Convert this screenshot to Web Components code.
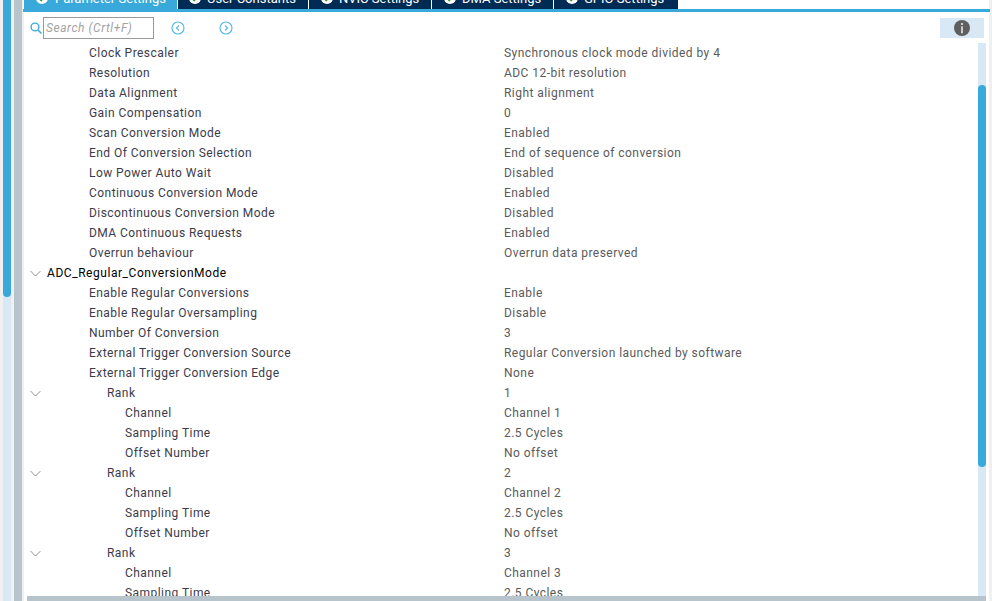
<!DOCTYPE html>
<html>
<head>
<meta charset="utf-8">
<title>Parameter Settings</title>
<style>
  html, body { margin: 0; height: 100%; overflow: hidden; background: #f0f0f0; }
  body { font: 12px Roboto, "Liberation Sans", sans-serif; }
</style>
</head>
<body>
<config-window>
  <settings-tab active style="width:153px">Parameter Settings</settings-tab>
  <settings-tab style="width:130px;padding-left:11px">User Constants</settings-tab>
  <settings-tab style="width:122px">NVIC Settings</settings-tab>
  <settings-tab style="width:121px">DMA Settings</settings-tab>
  <settings-tab style="width:124px">GPIO Settings</settings-tab>

  <param-row slot="rows" depth="1">Clock Prescaler<span slot="value">Synchronous clock mode divided by 4</span></param-row>
  <param-row slot="rows" depth="1">Resolution<span slot="value">ADC 12-bit resolution</span></param-row>
  <param-row slot="rows" depth="1">Data Alignment<span slot="value">Right alignment</span></param-row>
  <param-row slot="rows" depth="1">Gain Compensation<span slot="value">0</span></param-row>
  <param-row slot="rows" depth="1">Scan Conversion Mode<span slot="value">Enabled</span></param-row>
  <param-row slot="rows" depth="1">End Of Conversion Selection<span slot="value">End of sequence of conversion</span></param-row>
  <param-row slot="rows" depth="1">Low Power Auto Wait<span slot="value">Disabled</span></param-row>
  <param-row slot="rows" depth="1">Continuous Conversion Mode<span slot="value">Enabled</span></param-row>
  <param-row slot="rows" depth="1">Discontinuous Conversion Mode<span slot="value">Disabled</span></param-row>
  <param-row slot="rows" depth="1">DMA Continuous Requests<span slot="value">Enabled</span></param-row>
  <param-row slot="rows" depth="1">Overrun behaviour<span slot="value">Overrun data preserved</span></param-row>
  <param-row slot="rows" depth="0" open>ADC_Regular_ConversionMode</param-row>
  <param-row slot="rows" depth="1">Enable Regular Conversions<span slot="value">Enable</span></param-row>
  <param-row slot="rows" depth="1">Enable Regular Oversampling<span slot="value">Disable</span></param-row>
  <param-row slot="rows" depth="1">Number Of Conversion<span slot="value">3</span></param-row>
  <param-row slot="rows" depth="1">External Trigger Conversion Source<span slot="value">Regular Conversion launched by software</span></param-row>
  <param-row slot="rows" depth="1">External Trigger Conversion Edge<span slot="value">None</span></param-row>
  <param-row slot="rows" depth="2" open>Rank<span slot="value">1</span></param-row>
  <param-row slot="rows" depth="3">Channel<span slot="value">Channel 1</span></param-row>
  <param-row slot="rows" depth="3">Sampling Time<span slot="value">2.5 Cycles</span></param-row>
  <param-row slot="rows" depth="3">Offset Number<span slot="value">No offset</span></param-row>
  <param-row slot="rows" depth="2" open>Rank<span slot="value">2</span></param-row>
  <param-row slot="rows" depth="3">Channel<span slot="value">Channel 2</span></param-row>
  <param-row slot="rows" depth="3">Sampling Time<span slot="value">2.5 Cycles</span></param-row>
  <param-row slot="rows" depth="3">Offset Number<span slot="value">No offset</span></param-row>
  <param-row slot="rows" depth="2" open>Rank<span slot="value">3</span></param-row>
  <param-row slot="rows" depth="3">Channel<span slot="value">Channel 3</span></param-row>
  <param-row slot="rows" depth="3">Sampling Time<span slot="value">2.5 Cycles</span></param-row>
</config-window>

<script>
class ScrollRail extends HTMLElement {
    constructor() {
        super();
        this.shadow = this.attachShadow({ mode: 'open' });
        const top = this.getAttribute('thumb-top') || 0;
        const height = this.getAttribute('thumb-height') || 0;
        this.shadow.innerHTML = `
            <style>
                :host { display: block; width: 8px; background: #d9e8f5; overflow: hidden; }
                .thumb { margin-top: ${top}px; height: ${height}px; background: #39a9dc; border-radius: 4px; }
            </style>
            <div class="thumb"></div>`;
    }
}

class SettingsTab extends HTMLElement {
    constructor() {
        super();
        this.shadow = this.attachShadow({ mode: 'open' });
        this.shadow.innerHTML = `
            <style>
                :host {
                    display: flex; align-items: center; gap: 6px; height: 22px; box-sizing: border-box; flex: none;
                    padding: 0 0 0 12px; background: #002b54; color: #fff; font-size: 13px; white-space: nowrap;
                }
                :host([active]) { background: #39a9dc; gap: 7px; }
                svg { width: 12px; height: 12px; flex: none; }
            </style>
            <svg viewBox="0 0 12 12"><circle cx="6" cy="6" r="6" fill="#fff"/><path d="M3 6.2 5.2 8.4 9 4" fill="none" stroke="#3f9c35" stroke-width="1.8"/></svg>
            <slot></slot>`;
    }
}

class ParamRow extends HTMLElement {
    constructor() {
        super();
        this.shadow = this.attachShadow({ mode: 'open' });
        const depth = Number(this.getAttribute('depth') || 0);
        const indent = [0, 42, 60, 78][depth]; // label start, measured from the first level
        this.shadow.innerHTML = `
            <style>
                :host { display: block; height: 20px; white-space: nowrap; color: #3b3b4a; letter-spacing: .45px; }
                :host([depth="0"]) { color: #000; letter-spacing: .55px; }
                .line { display: flex; align-items: center; height: 20px; }
                .twist { width: 21px; flex: none; display: flex; padding-left: 4px; box-sizing: border-box; }
                .label { width: 457px; flex: none; box-sizing: border-box; padding-left: ${indent}px; }
                .value { color: #5a5a5a; }
                svg { width: 11px; height: 7px; visibility: hidden; }
                :host([open]) svg { visibility: visible; }
            </style>
            <div class="line">
                <div class="twist"><svg viewBox="0 0 11 7"><path d="M.5 1 5.5 6 10.5 1" fill="none" stroke="#8e8e8e"/></svg></div>
                <div class="label"><slot></slot></div>
                <div class="value"><slot name="value"></slot></div>
            </div>`;
    }
}

class ConfigWindow extends HTMLElement {
    constructor() {
        super();
        this.shadow = this.attachShadow({ mode: 'open' });
        this.shadow.innerHTML = `
            <style>
                :host { display: flex; height: 100vh; overflow: hidden; background: #f0f0f0; }
                scroll-rail.side { margin: 0 3px; flex: none; height: 100%; }
                .splitter { width: 8px; flex: none; background: #b8c4cb; margin-right: 1px; }
                .panel { flex: none; width: 966px; display: flex; flex-direction: column; background: #fff; }
                .tabs { height: 9px; display: flex; align-items: flex-end; gap: 1px; overflow: hidden; background: #fff; padding-left: 1px; flex: none; }
                .rule { height: 3px; background: #39a9dc; flex: none; margin-right: -1px; }
                .toolbar { height: 31px; flex: none; display: flex; align-items: center; box-sizing: border-box; padding: 1px 5px 0 6px; border-left: 1px solid #f0f0f0; }
                .search { width: 12px; height: 12px; flex: none; margin-right: 1px; }
                .box {
                    width: 111px; height: 22px; box-sizing: border-box; border: 1px solid #999; padding-left: 2px;
                    font-style: italic; color: #a3a3a3; line-height: 21px; letter-spacing: .55px;
                }
                .nav { width: 14px; height: 14px; flex: none; }
                .nav.prev { margin-left: 17px; }
                .nav.next { margin-left: 34px; }
                .info { margin-left: auto; width: 44px; height: 20px; background: #d9e8f5; display: flex; align-items: center; justify-content: center; }
                .info svg { width: 16px; height: 16px; }
                .body { flex: none; height: 553px; display: flex; padding-left: 2px; border-left: 1px solid #f0f0f0; }
                .tree { flex: 1; min-width: 0; overflow: hidden; }
                .foot { flex: none; padding: 0 3px; border-left: 1px solid #f0f0f0; }
                .hbar { height: 5px; background: #b8c4cb; }
                .vbar { flex: none; margin-right: 3px; }
            </style>
            <scroll-rail class="side" thumb-top="-10" thumb-height="307"></scroll-rail>
            <div class="splitter"></div>
            <div class="panel">
                <div class="tabs"><slot></slot></div>
                <div class="rule"></div>
                <div class="toolbar">
                    <svg class="search" viewBox="0 0 12 12"><circle cx="5" cy="5" r="3.9" fill="none" stroke="#39a9dc" stroke-width="1.4"/><path d="M8 8 11.5 11.5" stroke="#39a9dc" stroke-width="1.5"/></svg>
                    <div class="box">Search (Crtl+F)</div>
                    <svg class="nav prev" viewBox="0 0 14 14"><circle cx="7" cy="7" r="6" fill="none" stroke="#5bb9e6" stroke-width="1.2"/><path d="M8 4.5 5.5 7 8 9.5" fill="none" stroke="#5bb9e6" stroke-width="1.2"/></svg>
                    <svg class="nav next" viewBox="0 0 14 14"><circle cx="7" cy="7" r="6" fill="none" stroke="#5bb9e6" stroke-width="1.2"/><path d="M6 4.5 8.5 7 6 9.5" fill="none" stroke="#5bb9e6" stroke-width="1.2"/></svg>
                    <div class="info"><svg viewBox="0 0 16 16"><circle cx="8" cy="8" r="8" fill="#5f5f5f"/><circle cx="8" cy="4" r="1.1" fill="#e8e8e8"/><rect x="7.2" y="6.3" width="1.6" height="7" fill="#e8e8e8"/></svg></div>
                </div>
                <div class="body">
                    <div class="tree"><slot name="rows"></slot></div>
                    <scroll-rail class="vbar" thumb-top="42" thumb-height="382"></scroll-rail>
                </div>
                <div class="foot"><div class="hbar"></div></div>
            </div>`;
    }
}

customElements.define('scroll-rail', ScrollRail);
customElements.define('settings-tab', SettingsTab);
customElements.define('param-row', ParamRow);
customElements.define('config-window', ConfigWindow);
</script>
</body>
</html>
